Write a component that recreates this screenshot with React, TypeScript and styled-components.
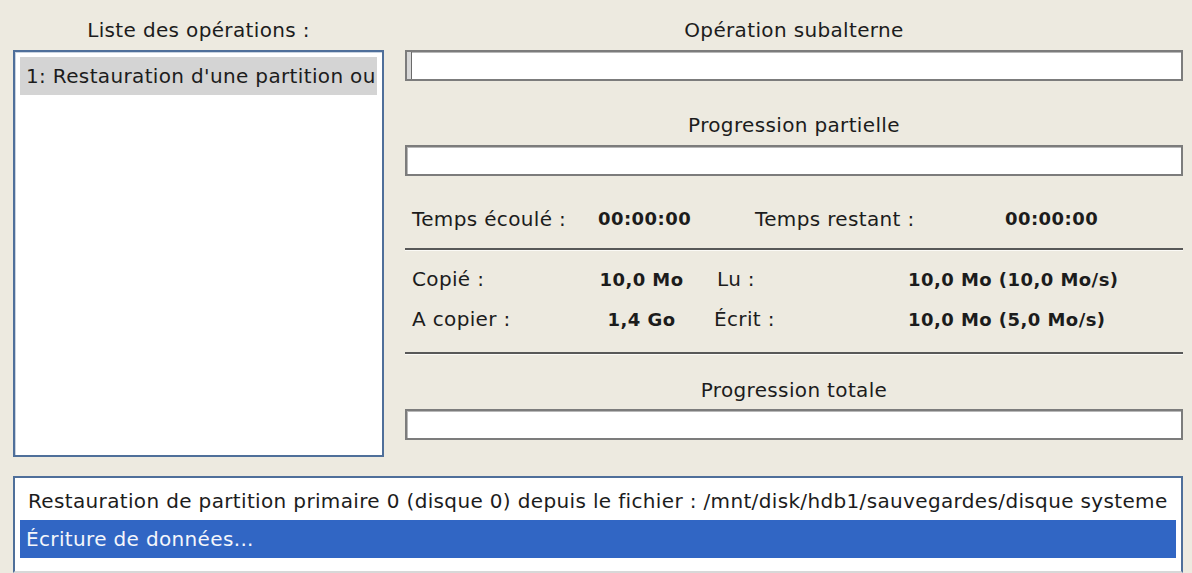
import React from "react";
import styled, { createGlobalStyle } from "styled-components";

const Global = createGlobalStyle`
  html, body { margin: 0; padding: 0; }
  body {
    background: #edeae0;
    font-family: "DejaVu Sans", "Liberation Sans", sans-serif;
    font-size: 20px;
    letter-spacing: 0.35px;
    color: #1c1c1c;
    width: 1192px;
    height: 573px;
    overflow: hidden;
  }
`;

const Page = styled.div`
  display: flex;
  flex-direction: column;
  padding: 0 9px 0 13px;
  height: 573px;
  box-sizing: border-box;
`;

const Top = styled.div`
  display: grid;
  grid-template-columns: 371px 778px;
  column-gap: 21px;
  height: 457px;
`;

const Column = styled.div`
  display: flex;
  flex-direction: column;
`;

const Heading = styled.div<{ $h?: number; $pt?: number }>`
  flex: none;
  height: ${(p) => p.$h ?? 50}px;
  display: flex;
  align-items: center;
  justify-content: center;
  padding-top: ${(p) => p.$pt ?? 10}px;
  box-sizing: border-box;
  white-space: nowrap;
`;

const ListBox = styled.div`
  flex: 1;
  background: #fff;
  border: 2px solid #4f6f9a;
  box-shadow: inset 1px 1px 0 #c9d3e0;
  padding: 5px 5px;
  overflow: hidden;
`;

const ListItem = styled.div<{ $sel?: "gray" | "blue"; $indent?: number }>`
  height: 38px;
  display: flex;
  align-items: center;
  padding-left: ${(p) => p.$indent ?? 6}px;
  white-space: nowrap;
  overflow: hidden;
  background: ${(p) =>
    p.$sel === "gray" ? "#d4d4d4" : p.$sel === "blue" ? "#3166c4" : "transparent"};
  color: ${(p) => (p.$sel === "blue" ? "#f4f6fb" : "#1c1c1c")};
`;

const Bar = styled.div`
  flex: none;
  height: 31px;
  box-sizing: border-box;
  background: #fff;
  border: 2px solid #7c7c7c;
  box-shadow: inset 1px 1px 0 #b8b8b8;
  display: flex;
`;

const BarFill = styled.div`
  background: #d8d8d8;
  border-right: 1px solid #6a6a6a;
`;

const TimeRow = styled.div`
  flex: none;
  display: grid;
  grid-template-columns: 186px 157px 250px 1fr;
  align-items: center;
  height: 39px;
  padding-left: 7px;
  white-space: nowrap;
`;

const StatRow = styled.div`
  flex: none;
  display: grid;
  grid-template-columns: 168px 123px 205px 1fr;
  align-items: center;
  height: 40px;
  padding-left: 7px;
  white-space: nowrap;
`;

const Label = styled.span<{ $indent?: number }>`
  padding-left: ${(p) => p.$indent ?? 0}px;
`;

const Value = styled.span<{ $center?: boolean }>`
  font-weight: bold;
  font-size: 18px;
  letter-spacing: 0.45px;
  text-align: ${(p) => (p.$center ? "center" : "left")};
`;

const Rule = styled.div`
  flex: none;
  height: 2px;
  background: #585858;
  border-bottom: 1px solid #fbfaf6;
`;

const Spacer = styled.div<{ $h: number }>`
  height: ${(p) => p.$h}px;
  flex: none;
`;

const LogBox = styled.div`
  margin-top: 19px;
  flex: 1;
  background: #fff;
  border: 2px solid #4f6f9a;
  border-bottom-color: #d8d8d8;
  padding: 4px 5px 0 5px;
  overflow: hidden;
`;

export default function App() {
  return (
    <>
      <Global />
      <Page>
        <Top>
          <Column>
            <Heading>Liste des opérations :</Heading>
            <ListBox>
              <ListItem $sel="gray">1: Restauration d'une partition ou</ListItem>
            </ListBox>
          </Column>
          <Column>
            <Heading>Opération subalterne</Heading>
            <Bar>
              <BarFill style={{ width: 4 }} />
            </Bar>
            <Heading $h={64} $pt={24}>Progression partielle</Heading>
            <Bar />
            <Spacer $h={23} />
            <TimeRow>
              <Label>Temps écoulé :</Label>
              <Value>00:00:00</Value>
              <Label>Temps restant :</Label>
              <Value>00:00:00</Value>
            </TimeRow>
            <Spacer $h={10} />
            <Rule />
            <Spacer $h={8} />
            <StatRow>
              <Label>Copié :</Label>
              <Value $center>10,0 Mo</Value>
              <Label $indent={14}>Lu :</Label>
              <Value>10,0 Mo (10,0 Mo/s)</Value>
            </StatRow>
            <StatRow>
              <Label>A copier :</Label>
              <Value $center>1,4 Go</Value>
              <Label $indent={11}>Écrit :</Label>
              <Value>10,0 Mo (5,0 Mo/s)</Value>
            </StatRow>
            <Spacer $h={13} />
            <Rule />
            <Heading $h={54} $pt={16}>Progression totale</Heading>
            <Bar />
          </Column>
        </Top>
        <LogBox>
          <ListItem $indent={8}>
            Restauration de partition primaire 0 (disque 0) depuis le fichier : /mnt/disk/hdb1/sauvegardes/disque systeme
          </ListItem>
          <ListItem $sel="blue" $indent={6}>Écriture de données...</ListItem>
        </LogBox>
      </Page>
    </>
  );
}
